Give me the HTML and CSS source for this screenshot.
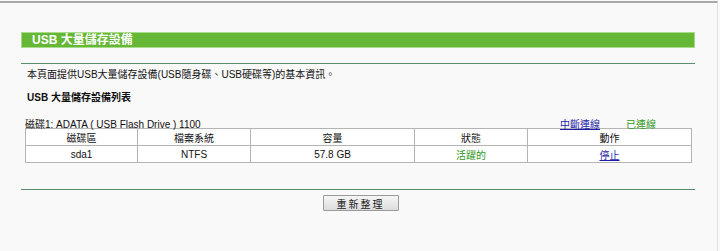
FILE: index.html
```html
<!DOCTYPE html>
<html lang="zh-Hant">
<head>
  <meta charset="UTF-8" />
  <title>USB 大量儲存設備</title>
  <link rel="stylesheet" href="styles.css">
</head>
<body>

<div class="frame">
  <div class="content">
    <div class="title-bar">USB 大量儲存設備</div>
    <div class="rule"></div>

    <p class="intro">本頁面提供USB大量儲存設備(USB隨身碟、USB硬碟等)的基本資訊。</p>
    <p class="list-title">USB 大量儲存設備列表</p>

    <div class="disk">
      <div class="disk-head">
        <span class="disk-name">磁碟1: ADATA ( USB Flash Drive ) 1100</span>
        <a href="#" class="disconnect">中斷連線</a>
        <span class="connected">已連線</span>
      </div>
      <table class="disk-table">
        <tr>
          <th class="c1">磁碟區</th>
          <th class="c2">檔案系統</th>
          <th class="c3">容量</th>
          <th class="c4">狀態</th>
          <th class="c5">動作</th>
        </tr>
        <tr>
          <td>sda1</td>
          <td>NTFS</td>
          <td>57.8 GB</td>
          <td class="active">活躍的</td>
          <td><a href="#">停止</a></td>
        </tr>
      </table>
    </div>

    <div class="rule bottom"></div>
    <div class="actions">
      <button class="refresh-btn">重新整理</button>
    </div>
  </div>
</div>

</body>
</html>
```

FILE: styles.css
```css
* {
  box-sizing: border-box;
}

body {
  margin: 0;
  background: #f9f9f9;
  font-family: "Liberation Sans", "Noto Sans CJK TC", sans-serif;
  font-size: 10px;
  color: #111;
}

.frame {
  margin-top: 1px;
  width: 718px;
  height: 250px;
  border-top: 2px solid #a9a9a9;
  border-right: 1px solid #e2e2e2;
}

.content {
  margin-left: 21px;
  width: 674px;
  padding-top: 29px;
}

.title-bar {
  height: 16px;
  background: #66b736;
  border: 1px solid #a6dc8a;
  color: white;
  font-weight: bold;
  font-size: 12px;
  line-height: 14px;
  padding-left: 10px;
}

.rule {
  margin-top: 15px;
  height: 1px;
  background: #5a8f6e;
}

.intro {
  margin: 4px 0 0 6px;
  line-height: 14px;
}

.list-title {
  margin: 9px 0 0 6px;
  font-weight: bold;
  line-height: 14px;
}

.disk {
  margin: 10px 0 0 4px;
  width: 667px;
}

.disk-head {
  display: flex;
  align-items: flex-start;
  height: 13px;
  padding-top: 1px;
}

.disk-name {
  flex: 1;
}

.disconnect {
  color: #1c1ca8;
  width: 66px;
}

.connected {
  color: #339a22;
  width: 66px;
}

.disk-table {
  width: 667px;
  border-collapse: collapse;
}

.disk-table th,
.disk-table td {
  border: 1px solid #b4b4b4;
  height: 17px;
  padding: 0;
  text-align: center;
  font-weight: normal;
  background: #fff;
}

.c1 { width: 112px; }
.c2 { width: 113px; }
.c3 { width: 164px; }
.c4 { width: 113px; }

.active {
  color: #339a22;
}

.disk-table a {
  color: #1c1ca8;
}

.rule.bottom {
  margin-top: 26px;
}

.actions {
  display: flex;
  justify-content: center;
  padding-top: 5px;
}

.refresh-btn {
  margin-left: 5px;
  width: 76px;
  height: 16px;
  padding: 0;
  font-family: "Liberation Sans", "Noto Sans CJK TC", sans-serif;
  font-size: 10px;
  letter-spacing: 2px;
  color: #222;
  background: linear-gradient(#f6f6f6, #dcdcdc);
  border: 1px solid #9a9a9a;
  border-radius: 1px;
}
```
